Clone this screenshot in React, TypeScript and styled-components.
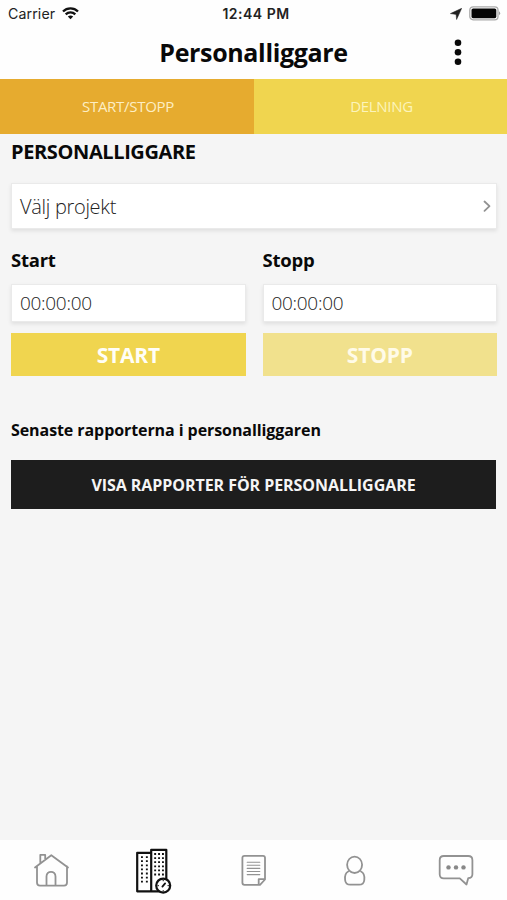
import React from 'react';
import styled, { createGlobalStyle } from 'styled-components';

const GlobalStyle = createGlobalStyle`
  * { box-sizing: border-box; }
  body { margin: 0; background: #f5f5f5; font-family: 'Open Sans', sans-serif; color: #090909; }
  button { font-family: inherit; border: 0; padding: 0; cursor: pointer; }
`;

const Screen = styled.div`
  display: flex;
  flex-direction: column;
  width: 507px;
  height: 900px;
  background: #f5f5f5;
  overflow: hidden;
`;

const StatusBar = styled.div`
  display: grid;
  grid-template-columns: 1fr auto 1fr;
  align-items: center;
  height: 27px;
  flex: none;
  padding: 0 6px 0 8px;
  background: #fefefe;
  font-family: Inter, sans-serif;
  color: #222;
`;

const StatusGroup = styled.div<{ $end?: boolean }>`
  display: flex;
  align-items: center;
  justify-content: ${(p) => (p.$end ? 'flex-end' : 'flex-start')};
  gap: 7px;
`;

const Carrier = styled.span`
  font-size: 14.2px;
  letter-spacing: 0.1px;
`;

const Clock = styled.span`
  font-size: 14px;
  font-weight: 600;
  letter-spacing: 0.5px;
  margin-left: 3px;
`;

const TitleBar = styled.header`
  display: grid;
  grid-template-columns: 1fr auto 1fr;
  align-items: center;
  height: 52px;
  flex: none;
  background: #fefefe;
`;

const Title = styled.h1`
  grid-column: 2;
  margin: 0;
  padding-bottom: 2px;
  font-size: 25px;
  letter-spacing: -0.35px;
  line-height: 50px;
  font-weight: 700;
`;

const MenuButton = styled.button`
  display: flex;
  justify-self: end;
  margin-right: 44px;
  background: none;
`;

const Tabs = styled.nav`
  display: grid;
  grid-template-columns: 254px 253px;
  height: 55px;
  flex: none;
`;

const Tab = styled.button<{ $active?: boolean }>`
  background: ${(p) => (p.$active ? '#e6ab2f' : '#f0d54f')};
  color: ${(p) => (p.$active ? '#fdeec4' : '#fcf4bb')};
  font-size: 15px;
  letter-spacing: -0.3px;
  padding: 0 0 2px 2px;
`;

const Content = styled.main`
  display: flex;
  flex-direction: column;
  flex: 1;
  padding: 0 10px 0 11px;
`;

const SectionTitle = styled.h2`
  margin: 0 0 14px;
  padding-top: 1px;
  font-size: 20px;
  letter-spacing: -0.38px;
  line-height: 34px;
  font-weight: 700;
`;

const Field = styled.div<{ $height: number; $size: number }>`
  display: flex;
  align-items: center;
  justify-content: space-between;
  height: ${(p) => p.$height}px;
  padding: 0 5px 0 8px;
  border: 1px solid #eaeaea;
  background: #fff;
  box-shadow: 0 2px 4px rgba(0, 0, 0, 0.09);
  font-size: ${(p) => p.$size}px;
  letter-spacing: -0.3px;
  font-weight: 300;
  color: #222;
`;

const Columns = styled.div`
  display: grid;
  grid-template-columns: 1fr 1fr;
  column-gap: 17px;
  margin-top: 14px;
`;

const Column = styled.section`
  display: flex;
  flex-direction: column;
`;

const Label = styled.h3`
  margin: 0 0 8px;
  font-size: 18.5px;
  letter-spacing: -0.25px;
  line-height: 33px;
  font-weight: 700;
`;

const ActionButton = styled.button<{ $muted?: boolean }>`
  height: 43px;
  margin-top: 11px;
  background: ${(p) => (p.$muted ? '#f1e18d' : '#f0d54f')};
  color: ${(p) => (p.$muted ? '#fffbe8' : '#fffef7')};
  font-size: 21px;
  letter-spacing: -0.2px;
  font-weight: 700;
`;

const ReportsTitle = styled.h3`
  margin: 42px 0 18px;
  font-size: 16px;
  letter-spacing: -0.08px;
  line-height: 24px;
  font-weight: 700;
`;

const ReportsButton = styled.button`
  height: 49px;
  margin-right: 1px;
  background: #1d1d1d;
  color: #f5f5f5;
  font-size: 16px;
  letter-spacing: -0.06px;
  font-weight: 700;
`;

const TabBar = styled.nav`
  display: grid;
  grid-template-columns: repeat(5, 1fr);
  height: 60px;
  flex: none;
  background: #fefefe;
`;

const NavItem = styled.button`
  display: flex;
  align-items: center;
  justify-content: center;
  background: none;
`;

const Glyph = styled.svg`
  display: block;
  flex: none;
  fill: none;
  stroke: #929292;
  stroke-width: 1.8;
  stroke-linecap: round;
  stroke-linejoin: round;
`;

const WifiIcon = () => (
  <svg width="17" height="13" viewBox="0 0 17 13" fill="none" stroke="#111" strokeWidth="2.3">
    <path d="M1 4.5C5.2 .3 11.8 .3 16 4.5M3.7 7.4C6.4 4.8 10.6 4.8 13.3 7.4" />
    <path d="M8.5 12.3 5.8 9.5Q8.5 7.3 11.2 9.5Z" fill="#111" stroke="none" />
  </svg>
);

const LocationIcon = () => (
  <svg width="12" height="12" viewBox="0 0 12 12" fill="#222" stroke="#222" strokeWidth=".5">
    <path d="M11.7.3 6.6 11.5 6.1 6.4.4 5.6Z" />
  </svg>
);

const BatteryIcon = () => (
  <svg width="32" height="15" viewBox="0 0 32 15">
    <rect x=".8" y=".8" width="28.2" height="13" rx="3.3" fill="#fff" stroke="#aaa" strokeWidth="1.3" />
    <rect x="2.5" y="2.4" width="24.8" height="9.8" rx="1.6" fill="#050505" />
    <path d="M30.2 5.2q1.9 2 0 4Z" fill="#888" />
  </svg>
);

const DotsIcon = () => (
  <svg width="10" height="28" viewBox="0 0 10 28" fill="#090909">
    <circle cx="5" cy="3.8" r="3.3" />
    <circle cx="5" cy="13.3" r="3.3" />
    <circle cx="5" cy="22.8" r="3.3" />
  </svg>
);

const ChevronIcon = () => (
  <Glyph width="8" height="13" viewBox="0 0 8 13">
    <path d="m1.5 1.5 5 4.7-5 4.7" />
  </Glyph>
);

const HomeIcon = () => (
  <Glyph width="50" height="50" viewBox="26 845 50 50">
    <path d="M35 867.5 51.3 855.2 68 867.5M37 866.5V882.5Q37 885.6 40 885.6H64Q67 885.6 67 882.5V866.5M40.3 862.5V854.8H45.2V859M46.5 885V876.5C46.5 870.2 55.5 870.2 55.5 876.5V885" />
  </Glyph>
);

const windowRows = [0, 1, 2, 3, 4, 5, 6];

const BuildingsIcon = () => (
  <Glyph width="50" height="50" viewBox="127 845.2 50 50">
    <g stroke="#111" strokeWidth="2.2">
      <path d="M151.2 853H137.2V891.5H161M151.2 891V850H166.3V880" />
      <g strokeWidth="1.8" strokeLinecap="butt">
        {windowRows.map((row) => (
          <path key={row} d={`M141 ${857.3 + row * 4.1}h1.9m3 0h1.9`} />
        ))}
        {windowRows.slice(0, 6).map((row) => (
          <path key={row} d={`M154.2 ${854.2 + row * 4.1}h1.9m2 0h1.9m2 0h1.9`} />
        ))}
      </g>
      <circle cx="163.2" cy="885.8" r="7" fill="#fff" />
      <path d="m162.4 886.8 2.7-3.2" strokeWidth="1.8" />
      <path d="M163.2 880.5v.4M163.2 890.8v.4M158 885.8h.4M168 885.8h.4" strokeWidth="1.1" />
    </g>
  </Glyph>
);

const DocumentIcon = () => (
  <Glyph width="50" height="50" viewBox="228 845 50 50">
    <path d="M244.5 855.8H263Q265 855.8 265 857.8V879.5L260 884.8H244.5Q242.4 884.8 242.4 882.8V857.8Q242.4 855.8 244.5 855.8ZM265 879.2H258.7V884.8" />
    <path d="M247.2 862.2h12.6m-12.6 3.1h12.6m-12.6 3.1h12.6m-12.6 3.1h12.6m-12.6 3.1h12.6" strokeWidth="1.1" />
  </Glyph>
);

const PersonIcon = () => (
  <Glyph width="50" height="50" viewBox="330 845 50 50">
    <ellipse cx="354.6" cy="864.8" rx="7.5" ry="8.2" />
    <path d="M348.2 871.5C344.8 873.2 344.7 876.5 345.1 880C345.4 883.5 347.5 884.7 350.5 884.7H359C362 884.7 364 883.5 364.3 880C364.7 876.5 364.5 873.2 361 871.5" />
  </Glyph>
);

const ChatIcon = () => (
  <Glyph width="50" height="50" viewBox="431 845 50 50">
    <path d="M443.8 856H468.2Q472.4 856 472.4 860.2V874.3Q472.4 878.2 468.2 878.2L466.5 884.5 459.8 878.4H443.8Q439.7 878.4 439.7 874.3V860.2Q439.7 856 443.8 856Z" />
    <g fill="#888" stroke="none">
      <circle cx="448.5" cy="867.4" r="2.2" />
      <circle cx="456" cy="867.4" r="2.2" />
      <circle cx="463.5" cy="867.4" r="2.2" />
    </g>
  </Glyph>
);

const navItems = [
  { label: 'Hem', Icon: HomeIcon },
  { label: 'Personalliggare', Icon: BuildingsIcon },
  { label: 'Dokument', Icon: DocumentIcon },
  { label: 'Profil', Icon: PersonIcon },
  { label: 'Meddelanden', Icon: ChatIcon },
];

export default function App() {
  return (
    <>
      <GlobalStyle />
      <Screen>
        <StatusBar>
          <StatusGroup><Carrier>Carrier</Carrier><WifiIcon /></StatusGroup>
          <Clock>12:44 PM</Clock>
          <StatusGroup $end><LocationIcon /><BatteryIcon /></StatusGroup>
        </StatusBar>
        <TitleBar>
          <Title>Personalliggare</Title>
          <MenuButton aria-label="Meny"><DotsIcon /></MenuButton>
        </TitleBar>
        <Tabs>
          <Tab $active>START/STOPP</Tab>
          <Tab>DELNING</Tab>
        </Tabs>
        <Content>
          <SectionTitle>PERSONALLIGGARE</SectionTitle>
          <Field $height={46} $size={20}>Välj projekt<ChevronIcon /></Field>
          <Columns>
            <Column>
              <Label>Start</Label>
              <Field $height={38} $size={19}>00:00:00</Field>
              <ActionButton>START</ActionButton>
            </Column>
            <Column>
              <Label>Stopp</Label>
              <Field $height={38} $size={19}>00:00:00</Field>
              <ActionButton $muted>STOPP</ActionButton>
            </Column>
          </Columns>
          <ReportsTitle>Senaste rapporterna i personalliggaren</ReportsTitle>
          <ReportsButton>VISA RAPPORTER FÖR PERSONALLIGGARE</ReportsButton>
        </Content>
        <TabBar>
          {navItems.map(({ label, Icon }) => (
            <NavItem key={label} aria-label={label}><Icon /></NavItem>
          ))}
        </TabBar>
      </Screen>
    </>
  );
}
